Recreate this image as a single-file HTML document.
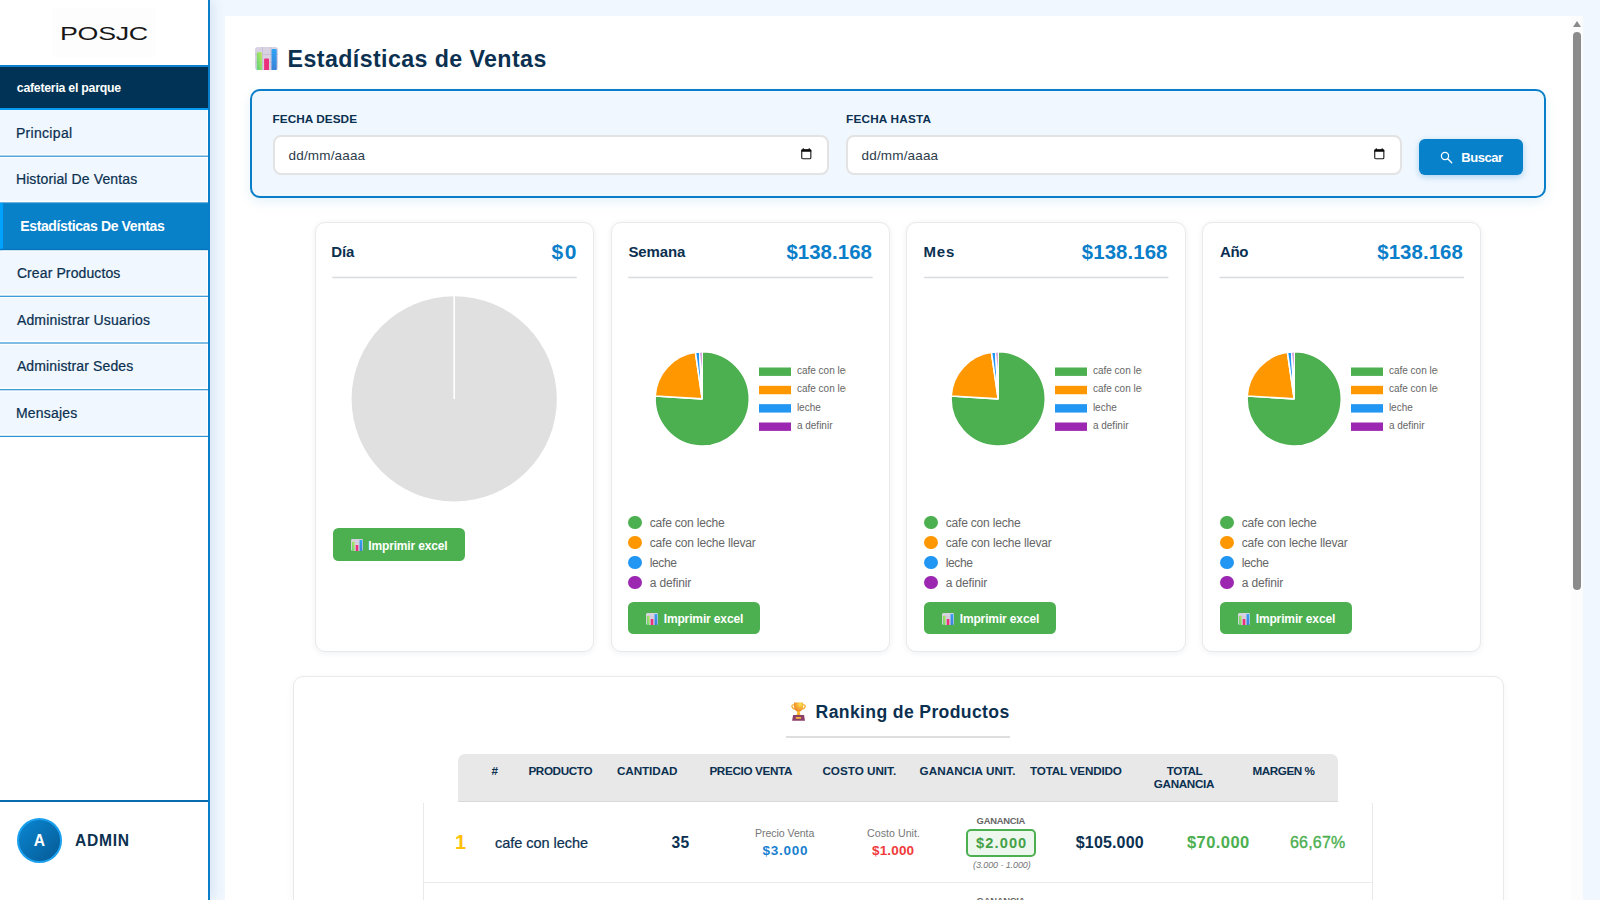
<!DOCTYPE html>
<html lang="es">
<head>
<meta charset="utf-8">
<title>POSJC - Estadísticas de Ventas</title>
<style>
*{box-sizing:border-box;margin:0;padding:0}
html,body{width:1600px;height:900px;overflow:hidden}
body{background:#f0f7ff;font-family:"Liberation Sans",sans-serif;color:#0b3050;position:relative}
.abs{position:absolute}
.t{position:absolute;white-space:nowrap;line-height:1}
#sidebar{position:absolute;left:0;top:0;width:210px;height:900px;background:#fff;border-right:2px solid #0a7ec9;box-shadow:3px 0 12px rgba(10,70,140,.11)}
#logo{position:absolute;left:52px;top:8px;width:104px;height:49px;background:#fdfdfd}
#logo span{position:absolute;left:8.2px;top:15.8px;font-size:19px;line-height:20px;color:#161616;letter-spacing:-.2px;transform-origin:0 50%;transform:scaleX(1.41);white-space:nowrap}
#sede{position:absolute;left:0;top:65px;width:208px;height:45px;background:#003355;border-top:2px solid #0a82d0;border-bottom:2px solid #089cf0}
.nav{position:absolute;left:0;width:208px;height:47px;background:#f0f7ff;border-bottom:1px solid #0a7ec9}
.nav.on{background:#0881c9;border-left:3px solid #00a2ff}
#user{position:absolute;left:0;top:800px;width:208px;height:100px;border-top:2px solid #0a6cb0;background:#fff}
#avatar{position:absolute;left:16.5px;top:16px;width:45px;height:45px;border-radius:50%;background:linear-gradient(135deg,#0a86d2,#065a94);border:2px solid #1aa0ee}
#panel{position:absolute;left:225px;top:16px;width:1358px;height:900px;background:#fff}
#sbtrack{position:absolute;left:1571px;top:16px;width:12px;height:884px;background:#fcfcfc}
#sbthumb{position:absolute;left:1573px;top:32px;width:8px;height:558px;border-radius:4px;background:#8b8b8b}
#sbarrow{position:absolute;left:1573px;top:21px;width:0;height:0;border-left:4px solid transparent;border-right:4px solid transparent;border-bottom:6px solid #8b8b8b}
#filter{position:absolute;left:250px;top:89px;width:1296px;height:109px;border:2px solid #0a7ec9;border-radius:10px;background:#f0f7ff;box-shadow:0 4px 12px rgba(10,126,201,.10)}
.finput{position:absolute;top:134.5px;width:556px;height:40px;background:#fff;border:2px solid #e3e3e3;border-radius:8px}
#buscar{position:absolute;left:1419px;top:139px;width:104px;height:36px;border-radius:6px;background:#0881cb;box-shadow:0 2px 6px rgba(10,126,201,.30)}
.card{position:absolute;top:222px;width:278px;height:430px;background:#fff;border:1px solid #e8e9ea;border-radius:10px;box-shadow:0 1px 6px rgba(20,40,80,.07)}
.cline{position:absolute;top:277.2px;width:244.2px;height:1.5px;background:#dde1e5}
.xbtn{position:absolute;width:132px;height:32.4px;border-radius:5.5px;background:#4caf50}
.dot{position:absolute;width:13.5px;height:13.5px;border-radius:50%}
#rank{position:absolute;left:293px;top:676px;width:1210.5px;height:260px;border:1px solid #e8e9ea;border-radius:10px;background:#fff;box-shadow:0 2px 8px rgba(0,0,0,.04)}
#thead{position:absolute;left:457.5px;top:754px;width:880.5px;height:48px;background:#e8e8e8;border-radius:7px 7px 0 0;border-bottom:1.4px solid #d9d9d9}
#tbody{position:absolute;left:422.5px;top:803px;width:950px;height:120px;border-left:1px solid #e9e9e9;border-right:1px solid #e9e9e9}
</style>
</head>
<body>
<div id="panel"></div><div id="sbtrack"></div><div id="sbarrow"></div><div id="sbthumb"></div>
<div id="sidebar"><div id="logo"><span>POSJC</span></div><div id="sede"></div>
<svg class="abs" style="left:0;top:108px" width="208" height="340" viewBox="0 108 208 340"><rect x="0" y="110.00" width="207" height="43.90" fill="#f0f7ff"/><rect x="0" y="155.60" width="208" height="1.2" fill="#2b92d4"/><rect x="0" y="158.00" width="207" height="42.60" fill="#f0f7ff"/><rect x="0" y="202.30" width="208" height="1.2" fill="#2b92d4"/><rect x="0" y="203.10" width="208" height="47" fill="#0881c9"/><rect x="0" y="203.10" width="3" height="47" fill="#00a2ff"/><rect x="0" y="248.80" width="208" height="1.3" fill="#0573bd"/><rect x="0" y="251.40" width="207" height="42.60" fill="#f0f7ff"/><rect x="0" y="295.70" width="208" height="1.2" fill="#2b92d4"/><rect x="0" y="298.10" width="207" height="42.60" fill="#f0f7ff"/><rect x="0" y="342.40" width="208" height="1.2" fill="#2b92d4"/><rect x="0" y="344.80" width="207" height="42.60" fill="#f0f7ff"/><rect x="0" y="389.10" width="208" height="1.2" fill="#2b92d4"/><rect x="0" y="391.50" width="207" height="42.60" fill="#f0f7ff"/><rect x="0" y="435.80" width="208" height="1.2" fill="#2b92d4"/></svg>
<div id="user"><div id="avatar"></div></div></div>
<svg class="abs" style="left:254.6px;top:47px" width="23" height="23" viewBox="0 0 23 23"><defs><clipPath id="ccp"><rect x="0" y="0" width="23" height="23" rx="2.8"/></clipPath><linearGradient id="cg1" x1="1" y1="0" x2="0" y2="1"><stop offset="0" stop-color="#bfea58"/><stop offset="1" stop-color="#58d07c"/></linearGradient><linearGradient id="cg2" x1="0" y1="0" x2="0" y2="1"><stop offset="0" stop-color="#2fa4f5"/><stop offset="1" stop-color="#3b7fd6"/></linearGradient></defs><g clip-path="url(#ccp)"><rect width="23" height="23" fill="#d9d2e3"/><path d="M7.5 0v23M15.9 0v23M0 7.5h23M0 15.3h23" stroke="#c3b9d0" stroke-width=".7"/><rect x="1.8" y="5.3" width="5.1" height="19" rx="1" fill="url(#cg1)"/><rect x="9.1" y="11.6" width="4.9" height="13" rx="1" fill="#ec2f7c"/><rect x="16.5" y="2" width="5.2" height="22" rx="1" fill="url(#cg2)"/></g></svg>
<div id="filter"></div>
<div class="finput" style="left:273px"></div><div class="finput" style="left:846px"></div>
<svg class="abs" style="left:801px;top:148.1px" width="11" height="12" viewBox="0 0 11 12"><rect x=".75" y="1.9" width="9.1" height="8.9" rx="1.1" fill="none" stroke="#151515" stroke-width="1.1"/><rect x=".3" y="1.4" width="10" height="2.3" rx=".6" fill="#0a0a0a"/><rect x="1.7" y=".3" width="1.2" height="1.6" fill="#111"/><rect x="7.6" y=".3" width="1.2" height="1.6" fill="#111"/></svg>
<svg class="abs" style="left:1374px;top:148.1px" width="11" height="12" viewBox="0 0 11 12"><rect x=".75" y="1.9" width="9.1" height="8.9" rx="1.1" fill="none" stroke="#151515" stroke-width="1.1"/><rect x=".3" y="1.4" width="10" height="2.3" rx=".6" fill="#0a0a0a"/><rect x="1.7" y=".3" width="1.2" height="1.6" fill="#111"/><rect x="7.6" y=".3" width="1.2" height="1.6" fill="#111"/></svg>
<div id="buscar"></div><svg class="abs" style="left:1440px;top:150.6px" width="13" height="13" viewBox="0 0 13 13"><circle cx="5" cy="5" r="3.6" fill="none" stroke="#fff" stroke-width="1.25"/><path d="M7.7 7.7l4 4" stroke="#fff" stroke-width="1.35" stroke-linecap="round"/></svg>
<div class="card" style="left:315px;width:279px"></div>
<div class="card" style="left:611px;width:279px"></div>
<div class="card" style="left:906px;width:280px"></div>
<div class="card" style="left:1202px;width:279px"></div>
<svg class="abs" style="left:300px;top:275px" width="1200" height="5" viewBox="300 275 1200 5"><rect x="332.3" y="276.75" width="244.45" height="1.5" fill="#d8dbdf"/><rect x="628.25" y="276.75" width="244.45" height="1.5" fill="#d8dbdf"/><rect x="924.0" y="276.75" width="244.45" height="1.5" fill="#d8dbdf"/><rect x="1219.6" y="276.75" width="244.45" height="1.5" fill="#d8dbdf"/></svg>
<svg class="abs" style="left:340px;top:285px" width="230" height="230" viewBox="340 285 230 230"><circle cx="454.2" cy="398.9" r="102.6" fill="#e0e0e0"/><path d="M454.2 296v102.9" stroke="#fff" stroke-width="1.6"/></svg>
<div class="xbtn" style="left:332.6px;top:528.3px"></div><svg class="abs" style="left:351px;top:539px" width="12" height="12" viewBox="0 0 23 23"><defs><clipPath id="ccp"><rect x="0" y="0" width="23" height="23" rx="2.8"/></clipPath><linearGradient id="cg1" x1="1" y1="0" x2="0" y2="1"><stop offset="0" stop-color="#bfea58"/><stop offset="1" stop-color="#58d07c"/></linearGradient><linearGradient id="cg2" x1="0" y1="0" x2="0" y2="1"><stop offset="0" stop-color="#2fa4f5"/><stop offset="1" stop-color="#3b7fd6"/></linearGradient></defs><g clip-path="url(#ccp)"><rect width="23" height="23" fill="#d9d2e3"/><path d="M7.5 0v23M15.9 0v23M0 7.5h23M0 15.3h23" stroke="#c3b9d0" stroke-width=".7"/><rect x="1.8" y="5.3" width="5.1" height="19" rx="1" fill="url(#cg1)"/><rect x="9.1" y="11.6" width="4.9" height="13" rx="1" fill="#ec2f7c"/><rect x="16.5" y="2" width="5.2" height="22" rx="1" fill="url(#cg2)"/></g></svg>
<svg class="abs" style="left:650.00px;top:345px" width="160" height="110" viewBox="650 345 160 110"><path d="M702.20 398.90L702.20 351.80A47.1 47.1 0 1 1 655.19 395.96Z" fill="#4caf50" stroke="#fff" stroke-width="1.6" stroke-linejoin="bevel"/><path d="M702.20 398.90L655.19 395.96A47.1 47.1 0 0 1 695.44 352.29Z" fill="#ff9800" stroke="#fff" stroke-width="1.6" stroke-linejoin="bevel"/><path d="M702.20 398.90L695.44 352.29A47.1 47.1 0 0 1 699.70 351.87Z" fill="#2196f3" stroke="#fff" stroke-width="1.6" stroke-linejoin="bevel"/><path d="M702.20 398.90L699.70 351.87A47.1 47.1 0 0 1 702.20 351.80Z" fill="#9c27b0" stroke="#fff" stroke-width="1.6" stroke-linejoin="bevel"/><rect x="759" y="367.50" width="32" height="8.4" fill="#4caf50"/><rect x="759" y="385.83" width="32" height="8.4" fill="#ff9800"/><rect x="759" y="404.16" width="32" height="8.4" fill="#2196f3"/><rect x="759" y="422.49" width="32" height="8.4" fill="#9c27b0"/></svg>
<div class="abs" style="left:796.00px;top:360px;width:49.6px;height:80px;overflow:hidden"><span class="t" style="left:0.9px;top:6.10px;font-size:10px;color:#666">cafe con leche</span><span class="t" style="left:0.9px;top:24.40px;font-size:10px;color:#666">cafe con leche llevar</span><span class="t" style="left:0.9px;top:42.70px;font-size:10px;color:#666">leche</span><span class="t" style="left:0.9px;top:61.00px;font-size:10px;color:#666">a definir</span></div>
<i class="dot" style="left:628.00px;top:515.8px;background:#4caf50"></i>
<i class="dot" style="left:628.00px;top:535.8px;background:#ff9800"></i>
<i class="dot" style="left:628.00px;top:555.8px;background:#2196f3"></i>
<i class="dot" style="left:628.00px;top:575.8px;background:#9c27b0"></i>
<div class="xbtn" style="left:628.00px;top:601.7px"></div><svg class="abs" style="left:646.3px;top:612.6px" width="12" height="12" viewBox="0 0 23 23"><defs><clipPath id="ccp"><rect x="0" y="0" width="23" height="23" rx="2.8"/></clipPath><linearGradient id="cg1" x1="1" y1="0" x2="0" y2="1"><stop offset="0" stop-color="#bfea58"/><stop offset="1" stop-color="#58d07c"/></linearGradient><linearGradient id="cg2" x1="0" y1="0" x2="0" y2="1"><stop offset="0" stop-color="#2fa4f5"/><stop offset="1" stop-color="#3b7fd6"/></linearGradient></defs><g clip-path="url(#ccp)"><rect width="23" height="23" fill="#d9d2e3"/><path d="M7.5 0v23M15.9 0v23M0 7.5h23M0 15.3h23" stroke="#c3b9d0" stroke-width=".7"/><rect x="1.8" y="5.3" width="5.1" height="19" rx="1" fill="url(#cg1)"/><rect x="9.1" y="11.6" width="4.9" height="13" rx="1" fill="#ec2f7c"/><rect x="16.5" y="2" width="5.2" height="22" rx="1" fill="url(#cg2)"/></g></svg>
<svg class="abs" style="left:946.00px;top:345px" width="160" height="110" viewBox="650 345 160 110"><path d="M702.20 398.90L702.20 351.80A47.1 47.1 0 1 1 655.19 395.96Z" fill="#4caf50" stroke="#fff" stroke-width="1.6" stroke-linejoin="bevel"/><path d="M702.20 398.90L655.19 395.96A47.1 47.1 0 0 1 695.44 352.29Z" fill="#ff9800" stroke="#fff" stroke-width="1.6" stroke-linejoin="bevel"/><path d="M702.20 398.90L695.44 352.29A47.1 47.1 0 0 1 699.70 351.87Z" fill="#2196f3" stroke="#fff" stroke-width="1.6" stroke-linejoin="bevel"/><path d="M702.20 398.90L699.70 351.87A47.1 47.1 0 0 1 702.20 351.80Z" fill="#9c27b0" stroke="#fff" stroke-width="1.6" stroke-linejoin="bevel"/><rect x="759" y="367.50" width="32" height="8.4" fill="#4caf50"/><rect x="759" y="385.83" width="32" height="8.4" fill="#ff9800"/><rect x="759" y="404.16" width="32" height="8.4" fill="#2196f3"/><rect x="759" y="422.49" width="32" height="8.4" fill="#9c27b0"/></svg>
<div class="abs" style="left:1092.00px;top:360px;width:49.6px;height:80px;overflow:hidden"><span class="t" style="left:0.9px;top:6.10px;font-size:10px;color:#666">cafe con leche</span><span class="t" style="left:0.9px;top:24.40px;font-size:10px;color:#666">cafe con leche llevar</span><span class="t" style="left:0.9px;top:42.70px;font-size:10px;color:#666">leche</span><span class="t" style="left:0.9px;top:61.00px;font-size:10px;color:#666">a definir</span></div>
<i class="dot" style="left:924.00px;top:515.8px;background:#4caf50"></i>
<i class="dot" style="left:924.00px;top:535.8px;background:#ff9800"></i>
<i class="dot" style="left:924.00px;top:555.8px;background:#2196f3"></i>
<i class="dot" style="left:924.00px;top:575.8px;background:#9c27b0"></i>
<div class="xbtn" style="left:924.00px;top:601.7px"></div><svg class="abs" style="left:942.3px;top:612.6px" width="12" height="12" viewBox="0 0 23 23"><defs><clipPath id="ccp"><rect x="0" y="0" width="23" height="23" rx="2.8"/></clipPath><linearGradient id="cg1" x1="1" y1="0" x2="0" y2="1"><stop offset="0" stop-color="#bfea58"/><stop offset="1" stop-color="#58d07c"/></linearGradient><linearGradient id="cg2" x1="0" y1="0" x2="0" y2="1"><stop offset="0" stop-color="#2fa4f5"/><stop offset="1" stop-color="#3b7fd6"/></linearGradient></defs><g clip-path="url(#ccp)"><rect width="23" height="23" fill="#d9d2e3"/><path d="M7.5 0v23M15.9 0v23M0 7.5h23M0 15.3h23" stroke="#c3b9d0" stroke-width=".7"/><rect x="1.8" y="5.3" width="5.1" height="19" rx="1" fill="url(#cg1)"/><rect x="9.1" y="11.6" width="4.9" height="13" rx="1" fill="#ec2f7c"/><rect x="16.5" y="2" width="5.2" height="22" rx="1" fill="url(#cg2)"/></g></svg>
<svg class="abs" style="left:1242.00px;top:345px" width="160" height="110" viewBox="650 345 160 110"><path d="M702.20 398.90L702.20 351.80A47.1 47.1 0 1 1 655.19 395.96Z" fill="#4caf50" stroke="#fff" stroke-width="1.6" stroke-linejoin="bevel"/><path d="M702.20 398.90L655.19 395.96A47.1 47.1 0 0 1 695.44 352.29Z" fill="#ff9800" stroke="#fff" stroke-width="1.6" stroke-linejoin="bevel"/><path d="M702.20 398.90L695.44 352.29A47.1 47.1 0 0 1 699.70 351.87Z" fill="#2196f3" stroke="#fff" stroke-width="1.6" stroke-linejoin="bevel"/><path d="M702.20 398.90L699.70 351.87A47.1 47.1 0 0 1 702.20 351.80Z" fill="#9c27b0" stroke="#fff" stroke-width="1.6" stroke-linejoin="bevel"/><rect x="759" y="367.50" width="32" height="8.4" fill="#4caf50"/><rect x="759" y="385.83" width="32" height="8.4" fill="#ff9800"/><rect x="759" y="404.16" width="32" height="8.4" fill="#2196f3"/><rect x="759" y="422.49" width="32" height="8.4" fill="#9c27b0"/></svg>
<div class="abs" style="left:1388.00px;top:360px;width:49.6px;height:80px;overflow:hidden"><span class="t" style="left:0.9px;top:6.10px;font-size:10px;color:#666">cafe con leche</span><span class="t" style="left:0.9px;top:24.40px;font-size:10px;color:#666">cafe con leche llevar</span><span class="t" style="left:0.9px;top:42.70px;font-size:10px;color:#666">leche</span><span class="t" style="left:0.9px;top:61.00px;font-size:10px;color:#666">a definir</span></div>
<i class="dot" style="left:1220.00px;top:515.8px;background:#4caf50"></i>
<i class="dot" style="left:1220.00px;top:535.8px;background:#ff9800"></i>
<i class="dot" style="left:1220.00px;top:555.8px;background:#2196f3"></i>
<i class="dot" style="left:1220.00px;top:575.8px;background:#9c27b0"></i>
<div class="xbtn" style="left:1220.00px;top:601.7px"></div><svg class="abs" style="left:1238.3px;top:612.6px" width="12" height="12" viewBox="0 0 23 23"><defs><clipPath id="ccp"><rect x="0" y="0" width="23" height="23" rx="2.8"/></clipPath><linearGradient id="cg1" x1="1" y1="0" x2="0" y2="1"><stop offset="0" stop-color="#bfea58"/><stop offset="1" stop-color="#58d07c"/></linearGradient><linearGradient id="cg2" x1="0" y1="0" x2="0" y2="1"><stop offset="0" stop-color="#2fa4f5"/><stop offset="1" stop-color="#3b7fd6"/></linearGradient></defs><g clip-path="url(#ccp)"><rect width="23" height="23" fill="#d9d2e3"/><path d="M7.5 0v23M15.9 0v23M0 7.5h23M0 15.3h23" stroke="#c3b9d0" stroke-width=".7"/><rect x="1.8" y="5.3" width="5.1" height="19" rx="1" fill="url(#cg1)"/><rect x="9.1" y="11.6" width="4.9" height="13" rx="1" fill="#ec2f7c"/><rect x="16.5" y="2" width="5.2" height="22" rx="1" fill="url(#cg2)"/></g></svg>
<div id="rank"></div>
<svg class="abs" style="left:790px;top:702.3px" width="17" height="20" viewBox="0 0 17 20"><defs><radialGradient id="tg" cx="0.68" cy="0.2" r="0.75"><stop offset="0" stop-color="#ffe655"/><stop offset=".45" stop-color="#f9b236"/><stop offset="1" stop-color="#ee8a2a"/></radialGradient></defs>
<path d="M4.2 2.9C1.3 2.2.7 5.6 4.9 7.2M12.9 2.9c2.9-.7 3.5 2.7-.7 4.3" fill="none" stroke="#f6ad2c" stroke-width="1.25"/>
<path d="M4 .6h9.1v3.9c0 3.3-2.1 5.1-4.55 5.5C6.1 9.600 4 7.800 4 4.500z" fill="url(#tg)"/>
<path d="M7.5 9.600h2.100l.9 3.700H6.600z" fill="#f8b52e"/>
<path d="M3.100 13.100h10.900l1 5.700H2.100z" fill="#8c3f6a"/>
<rect x="5.800" y="14.900" width="5.300" height="1.900" rx=".3" fill="#f6b93b"/></svg>
<div class="abs" style="left:786px;top:736px;width:224px;height:1.6px;background:#dedede"></div>
<div id="thead"></div>
<div id="tbody"></div>
<div class="abs" style="left:424px;top:881.5px;width:948px;height:1.2px;background:#ececec"></div>
<div class="abs" style="left:966px;top:829.3px;width:70.3px;height:28px;border:2px solid #4caf50;border-radius:5px;background:#eef7ee"></div>
<span class="t" style="left:16.80px;top:82.00px;font-size:12.3px;color:#fff;font-weight:700;letter-spacing:-0.246px;">cafeteria el parque</span>
<span class="t" style="left:15.90px;top:126.00px;font-size:14px;color:#0b3050;-webkit-text-stroke:0.22px #0b3050;letter-spacing:0.315px;">Principal</span>
<span class="t" style="left:15.90px;top:172.00px;font-size:14px;color:#0b3050;-webkit-text-stroke:0.22px #0b3050;letter-spacing:0.125px;">Historial De Ventas</span>
<span class="t" style="left:16.90px;top:266.00px;font-size:14px;color:#0b3050;-webkit-text-stroke:0.22px #0b3050;letter-spacing:0.105px;">Crear Productos</span>
<span class="t" style="left:16.90px;top:313.00px;font-size:14px;color:#0b3050;-webkit-text-stroke:0.22px #0b3050;letter-spacing:0.167px;">Administrar Usuarios</span>
<span class="t" style="left:16.90px;top:359.00px;font-size:14px;color:#0b3050;-webkit-text-stroke:0.22px #0b3050;letter-spacing:0.126px;">Administrar Sedes</span>
<span class="t" style="left:15.90px;top:406.00px;font-size:14px;color:#0b3050;-webkit-text-stroke:0.22px #0b3050;letter-spacing:0.198px;">Mensajes</span>
<span class="t" style="left:20.30px;top:219.00px;font-size:14px;color:#fff;font-weight:700;letter-spacing:-0.383px;">Estadísticas De Ventas</span>
<span class="t" style="left:33.75px;top:833.00px;font-size:15.6px;color:#fff;font-weight:700;">A</span>
<span class="t" style="left:75.00px;top:833.00px;font-size:15.6px;color:#0b3050;font-weight:700;letter-spacing:0.726px;">ADMIN</span>
<span class="t" style="left:287.60px;top:48.00px;font-size:23.2px;color:#0b3050;font-weight:700;letter-spacing:0.412px;">Estadísticas de Ventas</span>
<span class="t" style="left:272.60px;top:114.00px;font-size:11.8px;color:#0b3050;font-weight:700;letter-spacing:0.031px;">FECHA DESDE</span>
<span class="t" style="left:846.00px;top:114.00px;font-size:11.8px;color:#0b3050;font-weight:700;letter-spacing:0.185px;">FECHA HASTA</span>
<span class="t" style="left:288.60px;top:149.00px;font-size:13.5px;color:#2d3d4c;letter-spacing:0.163px;">dd/mm/aaaa</span>
<span class="t" style="left:861.60px;top:149.00px;font-size:13.5px;color:#2d3d4c;letter-spacing:0.163px;">dd/mm/aaaa</span>
<span class="t" style="left:1461.30px;top:151.00px;font-size:13px;color:#fff;font-weight:700;letter-spacing:-0.484px;">Buscar</span>
<span class="t" style="left:331.30px;top:244.00px;font-size:15px;color:#0b3050;font-weight:700;letter-spacing:-0.100px;">Día</span>
<span class="t" style="left:551.62px;top:241.00px;font-size:21px;color:#0a7ec9;font-weight:700;letter-spacing:1.500px;">$0</span>
<span class="t" style="left:628.40px;top:244.00px;font-size:15px;color:#0b3050;font-weight:700;letter-spacing:-0.118px;">Semana</span>
<span class="t" style="left:923.40px;top:244.00px;font-size:15px;color:#0b3050;font-weight:700;letter-spacing:0.900px;">Mes</span>
<span class="t" style="left:1219.90px;top:244.00px;font-size:15px;color:#0b3050;font-weight:700;letter-spacing:-0.298px;">Año</span>
<span class="t" style="left:786.40px;top:242.00px;font-size:20.4px;color:#0a7ec9;font-weight:700;letter-spacing:0.070px;">$138.168</span>
<span class="t" style="left:649.70px;top:517.00px;font-size:12px;color:#666;letter-spacing:-0.185px;">cafe con leche</span>
<span class="t" style="left:649.70px;top:537.00px;font-size:12px;color:#666;letter-spacing:-0.165px;">cafe con leche llevar</span>
<span class="t" style="left:649.70px;top:557.00px;font-size:12px;color:#666;letter-spacing:-0.378px;">leche</span>
<span class="t" style="left:649.70px;top:577.00px;font-size:12px;color:#666;letter-spacing:-0.149px;">a definir</span>
<span class="t" style="left:663.70px;top:613.00px;font-size:12px;color:#fff;font-weight:700;letter-spacing:-0.134px;">Imprimir excel</span>
<span class="t" style="left:1081.85px;top:242.00px;font-size:20.4px;color:#0a7ec9;font-weight:700;letter-spacing:0.070px;">$138.168</span>
<span class="t" style="left:945.70px;top:517.00px;font-size:12px;color:#666;letter-spacing:-0.185px;">cafe con leche</span>
<span class="t" style="left:945.70px;top:537.00px;font-size:12px;color:#666;letter-spacing:-0.165px;">cafe con leche llevar</span>
<span class="t" style="left:945.70px;top:557.00px;font-size:12px;color:#666;letter-spacing:-0.378px;">leche</span>
<span class="t" style="left:945.70px;top:577.00px;font-size:12px;color:#666;letter-spacing:-0.149px;">a definir</span>
<span class="t" style="left:959.70px;top:613.00px;font-size:12px;color:#fff;font-weight:700;letter-spacing:-0.134px;">Imprimir excel</span>
<span class="t" style="left:1377.30px;top:242.00px;font-size:20.4px;color:#0a7ec9;font-weight:700;letter-spacing:0.070px;">$138.168</span>
<span class="t" style="left:1241.70px;top:517.00px;font-size:12px;color:#666;letter-spacing:-0.185px;">cafe con leche</span>
<span class="t" style="left:1241.70px;top:537.00px;font-size:12px;color:#666;letter-spacing:-0.165px;">cafe con leche llevar</span>
<span class="t" style="left:1241.70px;top:557.00px;font-size:12px;color:#666;letter-spacing:-0.378px;">leche</span>
<span class="t" style="left:1241.70px;top:577.00px;font-size:12px;color:#666;letter-spacing:-0.149px;">a definir</span>
<span class="t" style="left:1255.70px;top:613.00px;font-size:12px;color:#fff;font-weight:700;letter-spacing:-0.134px;">Imprimir excel</span>
<span class="t" style="left:368.30px;top:540.00px;font-size:12px;color:#fff;font-weight:700;letter-spacing:-0.157px;">Imprimir excel</span>
<span class="t" style="left:815.60px;top:704.00px;font-size:17.6px;color:#0b3050;font-weight:700;letter-spacing:0.362px;">Ranking de Productos</span>
<span class="t" style="left:491.40px;top:765.00px;font-size:11.7px;color:#0b3050;font-weight:700;">#</span>
<span class="t" style="left:528.40px;top:765.00px;font-size:11.7px;color:#0b3050;font-weight:700;letter-spacing:-0.368px;">PRODUCTO</span>
<span class="t" style="left:617.00px;top:765.00px;font-size:11.7px;color:#0b3050;font-weight:700;letter-spacing:-0.084px;">CANTIDAD</span>
<span class="t" style="left:709.40px;top:765.00px;font-size:11.7px;color:#0b3050;font-weight:700;letter-spacing:-0.342px;">PRECIO VENTA</span>
<span class="t" style="left:822.40px;top:765.00px;font-size:11.7px;color:#0b3050;font-weight:700;">COSTO UNIT.</span>
<span class="t" style="left:919.60px;top:765.00px;font-size:11.7px;color:#0b3050;font-weight:700;letter-spacing:0.062px;">GANANCIA UNIT.</span>
<span class="t" style="left:1030.00px;top:765.00px;font-size:11.7px;color:#0b3050;font-weight:700;letter-spacing:-0.190px;">TOTAL VENDIDO</span>
<span class="t" style="left:1166.75px;top:765.00px;font-size:11.7px;color:#0b3050;font-weight:700;letter-spacing:-0.500px;">TOTAL</span>
<span class="t" style="left:1252.50px;top:765.00px;font-size:11.7px;color:#0b3050;font-weight:700;letter-spacing:-0.456px;">MARGEN %</span>
<span class="t" style="left:1153.75px;top:778.00px;font-size:11.7px;color:#0b3050;font-weight:700;letter-spacing:-0.327px;">GANANCIA</span>
<span class="t" style="left:455.00px;top:832.00px;font-size:20px;color:#ffc107;font-weight:700;">1</span>
<span class="t" style="left:495.00px;top:836.00px;font-size:14.5px;color:#0b3050;-webkit-text-stroke:0.22px #0b3050;letter-spacing:-0.034px;">cafe con leche</span>
<span class="t" style="left:671.60px;top:835.00px;font-size:15.6px;color:#0b3050;font-weight:700;letter-spacing:0.127px;">35</span>
<span class="t" style="left:755.00px;top:828.00px;font-size:10.6px;color:#777;letter-spacing:-0.071px;">Precio Venta</span>
<span class="t" style="left:762.60px;top:844.00px;font-size:13.5px;color:#1a7fd0;font-weight:700;letter-spacing:0.723px;">$3.000</span>
<span class="t" style="left:867.00px;top:828.00px;font-size:10.6px;color:#777;letter-spacing:0.054px;">Costo Unit.</span>
<span class="t" style="left:872.00px;top:844.00px;font-size:13.5px;color:#f03a3a;font-weight:700;letter-spacing:0.163px;">$1.000</span>
<span class="t" style="left:976.60px;top:816.00px;font-size:9.4px;color:#666;font-weight:700;letter-spacing:-0.250px;">GANANCIA</span>
<span class="t" style="left:976.09px;top:836.00px;font-size:14.6px;color:#43a047;font-weight:700;letter-spacing:1.100px;">$2.000</span>
<span class="t" style="left:973.00px;top:861.00px;font-size:9px;color:#777;font-style:italic;letter-spacing:-0.092px;">(3.000 - 1.000)</span>
<span class="t" style="left:1075.75px;top:835.00px;font-size:16px;color:#0b3050;font-weight:700;letter-spacing:0.166px;">$105.000</span>
<span class="t" style="left:1187.00px;top:834.00px;font-size:16.5px;color:#4caf50;font-weight:700;letter-spacing:0.422px;">$70.000</span>
<span class="t" style="left:1290.00px;top:835.00px;font-size:16px;color:#4caf50;-webkit-text-stroke:0.35px #4caf50;letter-spacing:0.192px;">66,67%</span>
<span class="t" style="left:976.60px;top:896.00px;font-size:9.4px;color:#666;font-weight:700;letter-spacing:-0.250px;">GANANCIA</span>
</body>
</html>
